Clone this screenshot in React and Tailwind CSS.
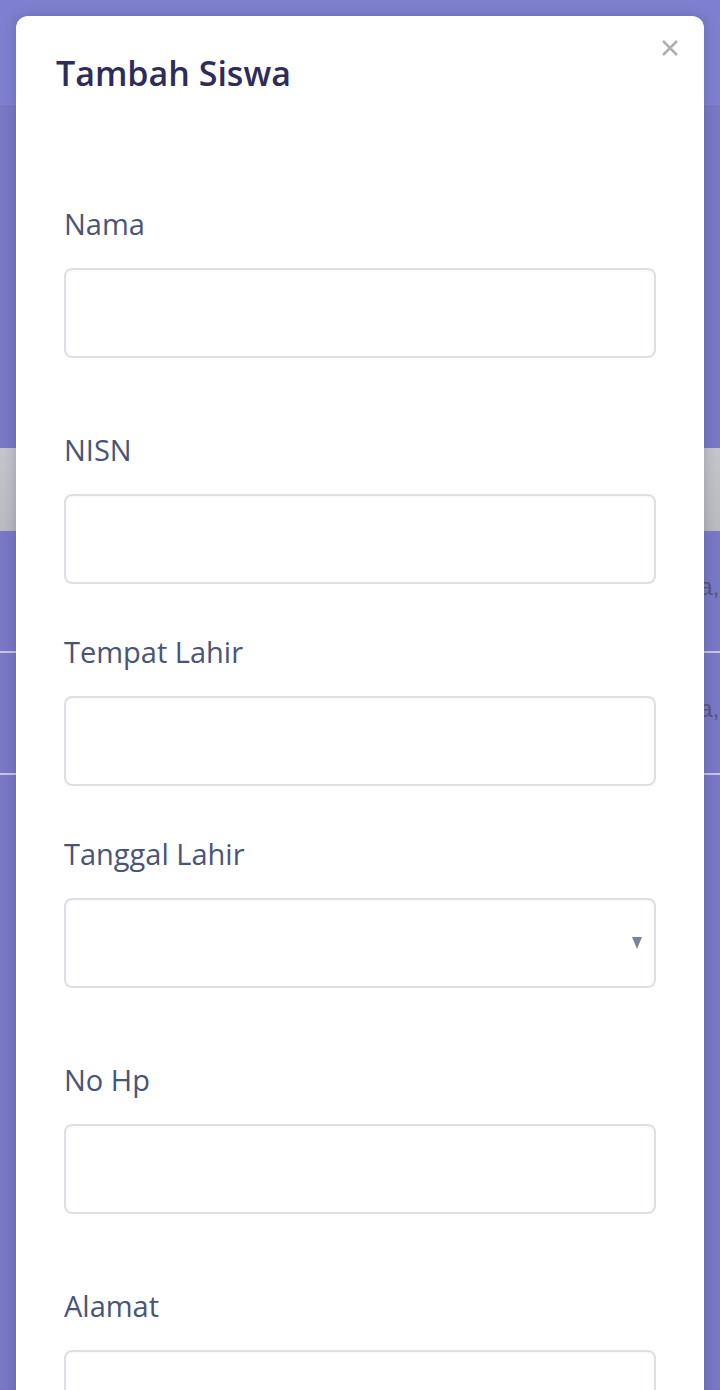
import React from 'react';

const fields = [
  { label: 'Nama', gap: 'mb-[78px]' },
  { label: 'NISN', gap: 'mb-[54px]' },
  { label: 'Tempat Lahir', gap: 'mb-[54px]' },
  { label: 'Tanggal Lahir', gap: 'mb-[78px]', select: true },
  { label: 'No Hp', gap: 'mb-[78px]' },
  { label: 'Alamat', gap: 'mb-[78px]' },
  { label: 'Kelas', gap: 'mb-[78px]' },
];

const rows = ['Jakarta, 12 Mei 2008', 'Jakarta, 3 Juni 2008'];

const App = () => {
  return (
    <div className="relative h-[1390px] overflow-hidden bg-[#7978c5] font-['Open_Sans',sans-serif]">
      {/* page behind the modal */}
      <div className="h-[105px] bg-[#7e80cf]" />
      <div className="pt-[343px]">
        <div className="h-[83px] bg-gradient-to-b from-[#c4c4ca] to-[#b9b9c0]" />
        {rows.map((r, i) => (
          <div key={i} className="flex h-[122px] items-center border-b-2 border-[#c6c6dc] pb-2">
            <div className="w-[634px] shrink-0" />
            <span className="whitespace-nowrap font-['Liberation_Sans',sans-serif] text-[24px] text-[#55567e]">{r}</span>
          </div>
        ))}
      </div>

      {/* modal */}
      <div className="absolute inset-0 overflow-hidden px-4 pt-4">
        <div className="relative rounded-xl bg-white px-12 pt-10 pb-10 shadow-[0_0_12px_rgba(40,40,90,0.25)]">
          <button className="absolute right-[24px] top-[22px] text-[#b0b0b0]">
            <svg width="20" height="20" viewBox="0 0 20 20" fill="none" stroke="currentColor" strokeWidth="2.6" strokeLinecap="butt">
              <path d="M3 3l14 14M17 3L3 17" />
            </svg>
          </button>

          <h2 className="-ml-2 text-[34px] font-[560] leading-none text-[#2e2c59]">Tambah Siswa</h2>

          <form className="mt-[120px]">
            {fields.map((f) => (
              <div key={f.label} className={f.gap}>
                <label className="mb-[30px] block text-[29px] font-medium leading-[28px] text-[#4a5478]">{f.label}</label>
                {f.select ? (
                  <div className="relative h-[90px] w-full rounded-lg border-2 border-[#dedfe5] shadow-[inset_0_1px_3px_rgba(0,0,0,0.04)]">
                    <svg className="absolute right-[12px] top-[37px]" width="10" height="12" viewBox="0 0 10 12" fill="#7b8598">
                      <path d="M0 0h10L5 12z" />
                    </svg>
                  </div>
                ) : (
                  <input
                    type="text"
                    className="block h-[90px] w-full rounded-lg border-2 border-[#dedfe5] px-4 shadow-[inset_0_1px_3px_rgba(0,0,0,0.04)] outline-none"
                  />
                )}
              </div>
            ))}
          </form>
        </div>
      </div>
    </div>
  );
};

export default App;
